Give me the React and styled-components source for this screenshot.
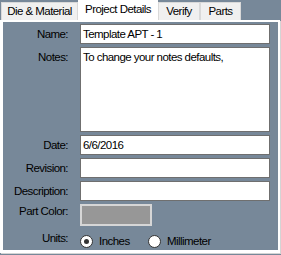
import React from "react";
import styled, { createGlobalStyle } from "styled-components";

const Global = createGlobalStyle`
  html, body { margin: 0; padding: 0; background: #778899; }
  body { width: 281px; height: 255px; overflow: hidden; font-family: "Liberation Sans", Arial, sans-serif; font-size: 11.5px; letter-spacing: -0.55px; color: #000; }
`;

const Window = styled.div`
  width: 281px;
  height: 255px;
  background: #778899;
  display: flex;
  flex-direction: column;
`;

const TabStrip = styled.div`
  display: flex;
  align-items: flex-end;
  height: 20px;
  padding-left: 1px;
  position: relative;
  z-index: 2;
`;

const Tab = styled.div`
  box-sizing: border-box;
  width: ${(p) => p.$w}px;
  height: ${(p) => (p.$active ? 22 : 18)}px;
  margin-bottom: ${(p) => (p.$active ? -2 : 0)}px;
  background: ${(p) => (p.$active ? "#ffffff" : "#f0f0f0")};
  border: 1px solid ${(p) => (p.$active ? "#ffffff" : "#d9d9d9")};
  border-bottom: none;
  display: flex;
  justify-content: center;
  padding-top: 2px;
  line-height: 13px;
  white-space: nowrap;
`;

const Panel = styled.div`
  box-sizing: border-box;
  width: 280px;
  height: 233px;
  border-style: solid;
  border-color: #ffffff;
  border-width: 2px 2px 3px 3px;
  box-shadow: 1px 1px 0 #d4d4d4;
  background: #778899;
  padding: 2px 7px 0 0;
  display: grid;
  grid-template-columns: 65px 190px;
  column-gap: 12px;
  row-gap: 3px;
  grid-template-rows: 20px 85px 20px 20px 20px 22px 22px;
`;

const Label = styled.div`
  text-align: right;
  white-space: nowrap;
  align-self: ${(p) => (p.$top ? "start" : "center")};
  padding-top: ${(p) => p.$pt || 0}px;
  line-height: 13px;
`;

const TextBox = styled.div`
  box-sizing: border-box;
  background: #fff;
  border: 1px solid #6f6f6f;
  padding: ${(p) => (p.$multi ? "3px 2px" : "0 2px")};
  display: flex;
  align-items: ${(p) => (p.$multi ? "flex-start" : "center")};
  line-height: 13px;
  white-space: nowrap;
  height: 100%;
`;

const Swatch = styled.div`
  box-sizing: border-box;
  width: 72px;
  height: 22px;
  background: #979797;
  border: 2px solid #d6d6d6;
`;

const RadioGroup = styled.div`
  display: flex;
  align-items: center;
  padding-top: 2px;
`;

const RadioOption = styled.label`
  display: flex;
  align-items: center;
  gap: 6px;
  width: ${(p) => p.$w}px;
`;

const RadioCircle = styled.span`
  box-sizing: border-box;
  width: 13px;
  height: 13px;
  border-radius: 50%;
  background: #fff;
  border: 1px solid #333;
  display: flex;
  align-items: center;
  justify-content: center;
  &::after {
    content: "";
    display: ${(p) => (p.$checked ? "block" : "none")};
    width: 5px;
    height: 5px;
    border-radius: 50%;
    background: #333;
  }
`;

export default function App() {
  return (
    <Window>
      <Global />
      <TabStrip>
        <Tab $w={77}>Die &amp; Material</Tab>
        <Tab $w={80} $active>Project Details</Tab>
        <Tab $w={42}>Verify</Tab>
        <Tab $w={41}>Parts</Tab>
      </TabStrip>
      <Panel>
        <Label>Name:</Label>
        <TextBox>Template APT - 1</TextBox>
        <Label $top $pt={4}>Notes:</Label>
        <TextBox $multi>To change your notes defaults,</TextBox>
        <Label>Date:</Label>
        <TextBox>6/6/2016</TextBox>
        <Label>Revision:</Label>
        <TextBox />
        <Label>Description:</Label>
        <TextBox />
        <Label $top $pt={1}>Part Color:</Label>
        <Swatch />
        <Label $top $pt={3}>Units:</Label>
        <RadioGroup>
          <RadioOption $w={68}>
            <RadioCircle $checked />
            Inches
          </RadioOption>
          <RadioOption $w={90}>
            <RadioCircle />
            Millimeter
          </RadioOption>
        </RadioGroup>
      </Panel>
    </Window>
  );
}
